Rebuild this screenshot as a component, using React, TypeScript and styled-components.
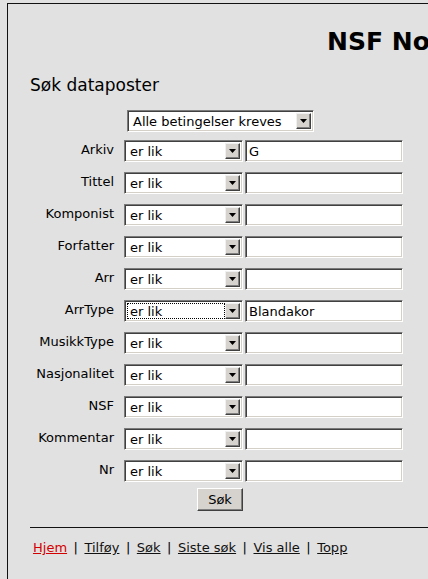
import React from "react";
import styled, { createGlobalStyle } from "styled-components";

const GlobalStyle = createGlobalStyle`
  html, body {
    margin: 0;
    padding: 0;
    background: #e1e1e1;
    overflow: hidden;
  }
  body {
    font-family: "DejaVu Sans", Verdana, sans-serif;
    color: #000;
  }
`;

const FIELDS = [
  { label: "Arkiv", value: "G" },
  { label: "Tittel", value: "" },
  { label: "Komponist", value: "" },
  { label: "Forfatter", value: "" },
  { label: "Arr", value: "" },
  { label: "ArrType", value: "Blandakor", focused: true },
  { label: "MusikkType", value: "" },
  { label: "Nasjonalitet", value: "" },
  { label: "NSF", value: "" },
  { label: "Kommentar", value: "" },
  { label: "Nr", value: "" },
];

const LINKS = ["Hjem", "Tilføy", "Søk", "Siste søk", "Vis alle", "Topp"];

const Page = styled.div`
  width: 428px;
  height: 579px;
  padding: 3px 0 0 7px;
  box-sizing: border-box;
  overflow: hidden;
`;

const Frame = styled.div`
  width: 640px;
  height: 600px;
  border-top: 1px solid #111;
  border-left: 1px solid #111;
  padding: 0 0 0 22px;
  box-sizing: border-box;
`;

const Title = styled.h1`
  margin: 0;
  padding: 21px 0 0 297px;
  font-family: "DejaVu Sans", Verdana, sans-serif;
  font-weight: bold;
  font-size: 25px;
  line-height: 34px;
  white-space: nowrap;
`;

const SubTitle = styled.h2`
  margin: 15px 0 0 0;
  font-weight: normal;
  font-size: 17px;
  line-height: 22px;
`;

const Form = styled.div`
  display: flex;
  flex-direction: column;
  width: 373px;
  margin-top: 14px;
`;

const Row = styled.div<{ $gap: number }>`
  display: grid;
  grid-template-columns: 94px 121px 158px;
  align-items: center;
  height: 22px;
  margin-top: ${(p) => p.$gap}px;
`;

const Label = styled.div`
  text-align: right;
  padding-right: 10px;
  font-size: 13px;
  line-height: 16px;
  margin-top: -2px;
  white-space: nowrap;
`;

const SelectBox = styled.div<{ $width: number }>`
  display: flex;
  align-items: center;
  width: ${(p) => p.$width}px;
  height: 22px;
  box-sizing: border-box;
  background: #fff;
  border-top: 1px solid #7a7a7a;
  border-left: 1px solid #7a7a7a;
  border-right: 1px solid #fff;
  border-bottom: 1px solid #fff;
  box-shadow: inset 1px 1px 0 #404040, inset -1px -1px 0 #d4d0c8;
  padding: 2px;
`;

const SelectText = styled.div<{ $focused?: boolean }>`
  flex: 1;
  height: 100%;
  display: flex;
  align-items: center;
  padding-left: 3px;
  font-size: 13px;
  white-space: nowrap;
  overflow: hidden;
  box-sizing: border-box;
  outline: ${(p) => (p.$focused ? "1px dotted #000" : "none")};
  outline-offset: -1px;
`;

const ArrowButton = styled.div`
  width: 15px;
  height: 16px;
  box-sizing: border-box;
  background: #d6d3ce;
  border-top: 1px solid #f0f0f0;
  border-left: 1px solid #f0f0f0;
  border-right: 1px solid #404040;
  border-bottom: 1px solid #404040;
  box-shadow: inset -1px -1px 0 #808080;
  display: flex;
  align-items: center;
  justify-content: center;
`;

const TextInput = styled.input`
  width: 158px;
  height: 22px;
  box-sizing: border-box;
  margin: 0;
  background: #fff;
  border-top: 1px solid #7a7a7a;
  border-left: 1px solid #7a7a7a;
  border-right: 1px solid #fff;
  border-bottom: 1px solid #fff;
  box-shadow: inset 1px 1px 0 #404040, inset -1px -1px 0 #d4d0c8;
  padding: 0 3px;
  font-family: inherit;
  font-size: 13px;
  color: #000;
  outline: none;
`;

const TopSelectWrap = styled.div`
  grid-column: 2 / 4;
  padding-left: 3px;
`;

const ButtonRow = styled.div`
  display: flex;
  justify-content: center;
  padding-left: 7px;
  margin-top: 6px;
`;

const SubmitButton = styled.button`
  width: 46px;
  height: 23px;
  box-sizing: border-box;
  background: #d6d3ce;
  border-top: 1px solid #fff;
  border-left: 1px solid #fff;
  border-right: 1px solid #404040;
  border-bottom: 1px solid #404040;
  box-shadow: inset -1px -1px 0 #808080;
  font-family: inherit;
  font-size: 13px;
  padding: 0;
  color: #000;
`;

const Rule = styled.div`
  height: 1px;
  background: #111;
  margin-top: 16px;
`;

const Nav = styled.div`
  margin-top: 11px;
  padding-left: 3px;
  font-size: 13px;
  line-height: 18px;
  white-space: nowrap;
`;

const NavLink = styled.a<{ $active?: boolean }>`
  color: ${(p) => (p.$active ? "#d40000" : "#111")};
  text-decoration: underline;
`;

const Sep = styled.span`
  padding: 0 6.5px;
`;

const Arrow = () => (
  <ArrowButton>
    <svg width="7" height="4" viewBox="0 0 7 4">
      <path d="M0 0h7L3.5 4z" fill="#000" />
    </svg>
  </ArrowButton>
);

const Select = ({ text, width, focused }: { text: string; width: number; focused?: boolean }) => (
  <SelectBox $width={width}>
    <SelectText $focused={focused}>{text}</SelectText>
    <Arrow />
  </SelectBox>
);

export default function App() {
  return (
    <>
      <GlobalStyle />
      <Page>
        <Frame>
          <Title>NSF Notearkiv</Title>
          <SubTitle>Søk dataposter</SubTitle>
          <Form>
            <Row $gap={0}>
              <div />
              <TopSelectWrap>
                <Select text="Alle betingelser kreves" width={187} />
              </TopSelectWrap>
            </Row>
            {FIELDS.map((f, i) => (
              <Row key={f.label} $gap={i === 0 ? 8 : 10}>
                <Label>{f.label}</Label>
                <Select text="er lik" width={119} focused={f.focused} />
                <TextInput defaultValue={f.value} />
              </Row>
            ))}
            <ButtonRow>
              <SubmitButton>Søk</SubmitButton>
            </ButtonRow>
          </Form>
          <Rule />
          <Nav>
            {LINKS.map((l, i) => (
              <React.Fragment key={l}>
                {i > 0 && <Sep>|</Sep>}
                <NavLink href="#" $active={i === 0}>
                  {l}
                </NavLink>
              </React.Fragment>
            ))}
          </Nav>
        </Frame>
      </Page>
    </>
  );
}
